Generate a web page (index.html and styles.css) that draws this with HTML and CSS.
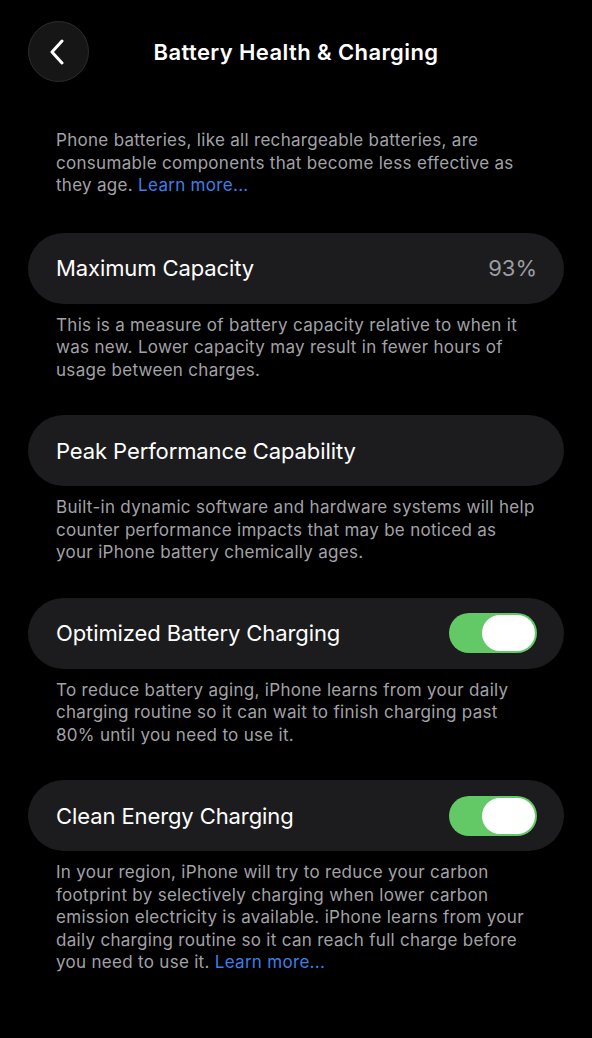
FILE: index.html
```html
<!DOCTYPE html>
<html lang="en">
<head>
  <meta charset="UTF-8" />
  <meta name="viewport" content="width=device-width, initial-scale=1.0"/>
  <title>Battery Health &amp; Charging</title>
  <link rel="stylesheet" href="styles.css">
</head>
<body>

  <div class="nav-bar">
    <button class="back" aria-label="Back">
      <svg width="18" height="26" viewBox="0 0 18 26" fill="none">
        <path d="M14 2 L4 13 L14 24" stroke="#fff" stroke-width="3" stroke-linecap="round" stroke-linejoin="round"/>
      </svg>
    </button>
    <h1>Battery Health &amp; Charging</h1>
    <span class="spacer"></span>
  </div>

  <p class="note intro">Phone batteries, like all rechargeable batteries, are consumable components that become less effective as they age. <a href="#">Learn more...</a></p>

  <div class="cell">
    <span class="label">Maximum Capacity</span>
    <span class="value">93%</span>
  </div>
  <p class="note">This is a measure of battery capacity relative to when it was new. Lower capacity may result in fewer hours of usage between charges.</p>

  <div class="cell">
    <span class="label">Peak Performance Capability</span>
  </div>
  <p class="note">Built-in dynamic software and hardware systems will help counter performance impacts that may be noticed as your iPhone battery chemically ages.</p>

  <div class="cell">
    <span class="label">Optimized Battery Charging</span>
    <span class="switch on"><span class="knob"></span></span>
  </div>
  <p class="note">To reduce battery aging, iPhone learns from your daily charging routine so it can wait to finish charging past 80% until you need to use it.</p>

  <div class="cell">
    <span class="label">Clean Energy Charging</span>
    <span class="switch on"><span class="knob"></span></span>
  </div>
  <p class="note">In your region, iPhone will try to reduce your carbon footprint by selectively charging when lower carbon emission electricity is available. iPhone learns from your daily charging routine so it can reach full charge before you need to use it. <a href="#">Learn more...</a></p>

</body>
</html>
```

FILE: styles.css
```css
body {
  margin: 0;
  background-color: #000000;
  color: #ffffff;
  font-family: 'Inter', 'Liberation Sans', sans-serif;
  padding: 21px 28px 40px;
}

.nav-bar {
  display: flex;
  align-items: center;
  height: 61px;
}

.back {
  width: 61px;
  height: 61px;
  border-radius: 50%;
  background-color: #161617;
  border: 1px solid #2c2c2e;
  display: flex;
  align-items: center;
  justify-content: center;
  padding: 0 4px 0 0;
  flex-shrink: 0;
}

.nav-bar h1 {
  flex: 1;
  margin: 0;
  text-align: center;
  font-size: 22px;
  font-weight: 600;
  letter-spacing: 0.4px;
}

.spacer {
  width: 61px;
  flex-shrink: 0;
}

.note {
  margin: 10px 0 34px;
  padding: 0 28px;
  font-size: 17px;
  line-height: 22.5px;
  color: #a2a2a7;
  letter-spacing: 0.3px;
}

.note a {
  color: #3f7ee6;
  text-decoration: none;
}

.intro {
  margin-top: 47px;
  margin-bottom: 36px;
}

.cell {
  height: 71px;
  border-radius: 36px;
  background-color: #1c1c1e;
  display: flex;
  align-items: center;
  justify-content: space-between;
  padding: 0 27px 0 28px;
}

.label {
  font-size: 22px;
  letter-spacing: -0.1px;
}

.value {
  font-size: 22px;
  color: #9c9ca1;
}

.switch {
  width: 88px;
  height: 40px;
  border-radius: 20px;
  background-color: #63c866;
  display: flex;
  align-items: center;
  justify-content: flex-end;
  padding: 0 2px;
  box-sizing: border-box;
}

.knob {
  width: 53px;
  height: 36px;
  border-radius: 18px;
  background-color: #ffffff;
}
```
